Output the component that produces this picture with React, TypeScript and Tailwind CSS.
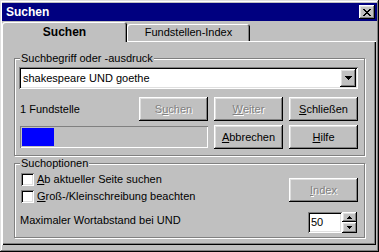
import React from 'react';

const raised =
  'shadow-[inset_-1px_-1px_#000,inset_1px_1px_#fff,inset_-2px_-2px_#808080,inset_2px_2px_#dfdfdf]';
const sunken =
  'shadow-[inset_1px_1px_#808080,inset_-1px_-1px_#fff,inset_2px_2px_#000,inset_-2px_-2px_#dfdfdf]';
const disabledText = 'text-[#808080] [text-shadow:1px_1px_0_#fff]';

const Button = ({
  children,
  disabled,
  className = '',
}: {
  children: React.ReactNode;
  disabled?: boolean;
  className?: string;
}) => (
  <div
    className={`w-[69px] h-[24px] flex items-center justify-center bg-[#c0c0c0] ${raised} ${
      disabled ? disabledText : 'text-black'
    } ${className}`}
  >
    {children}
  </div>
);

const U = ({ children }: { children: React.ReactNode }) => <span className="underline">{children}</span>;

const Group = ({
  label,
  className = '',
  children,
}: {
  label: string;
  className?: string;
  children: React.ReactNode;
}) => (
  <div className={`relative border border-[#808080] shadow-[1px_1px_0_#fff,inset_1px_1px_0_#fff] ${className}`}>
    <span className="absolute -top-[7px] left-[5px] bg-[#c0c0c0] px-px leading-[13px]">{label}</span>
    {children}
  </div>
);

const CloseX = () => (
  <svg width="8" height="7" viewBox="0 0 8 7" shapeRendering="crispEdges">
    <path d="M0 0h2v1H0zM6 0h2v1H6zM1 1h2v1H1zM5 1h2v1H5zM2 2h4v1H2zM3 3h2v1H3zM2 4h4v1H2zM1 5h2v1H1zM5 5h2v1H5zM0 6h2v1H0zM6 6h2v1H6z" fill="#000" />
  </svg>
);

const ArrowDown = ({ w = 7 }: { w?: number }) => (
  <svg width={w} height={Math.ceil(w / 2)} viewBox={`0 0 ${w} ${Math.ceil(w / 2)}`} shapeRendering="crispEdges">
    {Array.from({ length: Math.ceil(w / 2) }).map((_, i) => (
      <rect key={i} x={i} y={i} width={w - i * 2} height={1} fill="#000" />
    ))}
  </svg>
);

const ArrowUp = ({ w = 5 }: { w?: number }) => (
  <svg width={w} height={Math.ceil(w / 2)} viewBox={`0 0 ${w} ${Math.ceil(w / 2)}`} shapeRendering="crispEdges">
    {Array.from({ length: Math.ceil(w / 2) }).map((_, i) => (
      <rect key={i} x={Math.ceil(w / 2) - 1 - i} y={i} width={i * 2 + 1} height={1} fill="#000" />
    ))}
  </svg>
);

const Checkbox = ({ children }: { children: React.ReactNode }) => (
  <div className="flex items-center h-[13px]">
    <div className={`w-[13px] h-[13px] bg-white ${sunken}`} />
    <span className="ml-[3px] leading-[13px]">{children}</span>
  </div>
);

export default function App() {
  return (
    <div
      className={`w-[379px] h-[252px] bg-[#c0c0c0] pt-[3px] px-[2px] font-['Liberation_Sans',Arial,sans-serif] text-[11px] text-black shadow-[inset_-1px_-1px_#000,inset_1px_1px_#dfdfdf,inset_-2px_-2px_#808080,inset_2px_2px_#fff] overflow-hidden`}
    >
      {/* title bar */}
      <div className="h-[18px] bg-[#000080] flex items-center justify-between pl-[4px] pr-[2px]">
        <span className="text-white font-bold text-[12px] leading-none">Suchen</span>
        <div className={`w-[16px] h-[14px] bg-[#c0c0c0] flex items-center justify-center ${raised}`}>
          <CloseX />
        </div>
      </div>

      {/* tabs */}
      <div className="mt-px h-[19px] flex">
        <div
          className={`relative z-10 w-[125px] h-[20px] self-start bg-[#c0c0c0] rounded-t-[3px] flex items-center justify-center font-bold text-[12px] shadow-[inset_1px_1px_#fff,inset_-1px_0_#000,inset_-2px_0_#808080]`}
        >
          Suchen
        </div>
        <div
          className={`w-[123px] h-[17px] self-end bg-[#c0c0c0] rounded-t-[3px] flex items-center justify-center shadow-[inset_1px_1px_#fff,inset_-1px_0_#000,inset_-2px_0_#808080]`}
        >
          Fundstellen-Index
        </div>
      </div>

      {/* panel */}
      <div
        className={`w-[374px] h-[204px] pt-[17px] pl-[12px] shadow-[inset_1px_1px_#fff,inset_-1px_-1px_#000,inset_-2px_-2px_#808080]`}
      >
        <Group label="Suchbegriff oder -ausdruck" className="w-[351px] h-[98px] pt-[8px] pl-[4px]">
          <div className={`w-[339px] h-[22px] p-[2px] flex bg-white ${sunken}`}>
            <div className="flex-1 flex items-center pl-[2px] bg-white">shakespeare UND goethe</div>
            <div className={`w-[16px] h-[18px] bg-[#c0c0c0] flex items-center justify-center ${raised}`}>
              <ArrowDown />
            </div>
          </div>

          <div className="mt-[8px] ml-px w-[338px] flex items-center">
            <span className="flex-1">1 Fundstelle</span>
            <div className="flex gap-[6px]">
              <Button disabled>
                S<U>u</U>chen
              </Button>
              <Button disabled>
                <U>W</U>eiter
              </Button>
              <Button>
                <U>S</U>chließen
              </Button>
            </div>
          </div>

          <div className="mt-[4px] ml-px flex items-center gap-[6px]">
            <div className={`w-[188px] h-[22px] p-[2px] shadow-[inset_1px_1px_#808080,inset_-1px_-1px_#fff]`}>
              <div className="w-[32px] h-full bg-[#0000ff]" />
            </div>
            <Button>
              <U>A</U>bbrechen
            </Button>
            <Button>
              <U>H</U>ilfe
            </Button>
          </div>
        </Group>

        <Group label="Suchoptionen" className="mt-[7px] w-[351px] h-[75px] flex">
          <div className="pt-[9px] pl-[6px] flex flex-col">
            <Checkbox>
              <U>A</U>b aktueller Seite suchen
            </Checkbox>
            <div className="mt-[4px]">
              <Checkbox>
                <U>G</U>roß-/Kleinschreibung beachten
              </Checkbox>
            </div>
            <span className="mt-[10px] -ml-px leading-[14px]">Maximaler Wortabstand bei UND</span>
          </div>
          <div className="ml-auto pr-[6px] pt-[14px] flex flex-col items-end">
            <Button disabled>
              <U>I</U>ndex
            </Button>
            <div className="mt-[10px] mr-px flex">
              <div className={`w-[34px] h-[21px] bg-white flex items-center pl-[3px] ${sunken}`}>50</div>
              <div className="flex flex-col">
                <div className={`w-[15px] h-[10px] bg-[#c0c0c0] flex items-center justify-center ${raised}`}>
                  <ArrowUp />
                </div>
                <div className={`w-[15px] h-[11px] bg-[#c0c0c0] flex items-center justify-center ${raised}`}>
                  <ArrowDown w={5} />
                </div>
              </div>
            </div>
          </div>
        </Group>
      </div>
    </div>
  );
}
